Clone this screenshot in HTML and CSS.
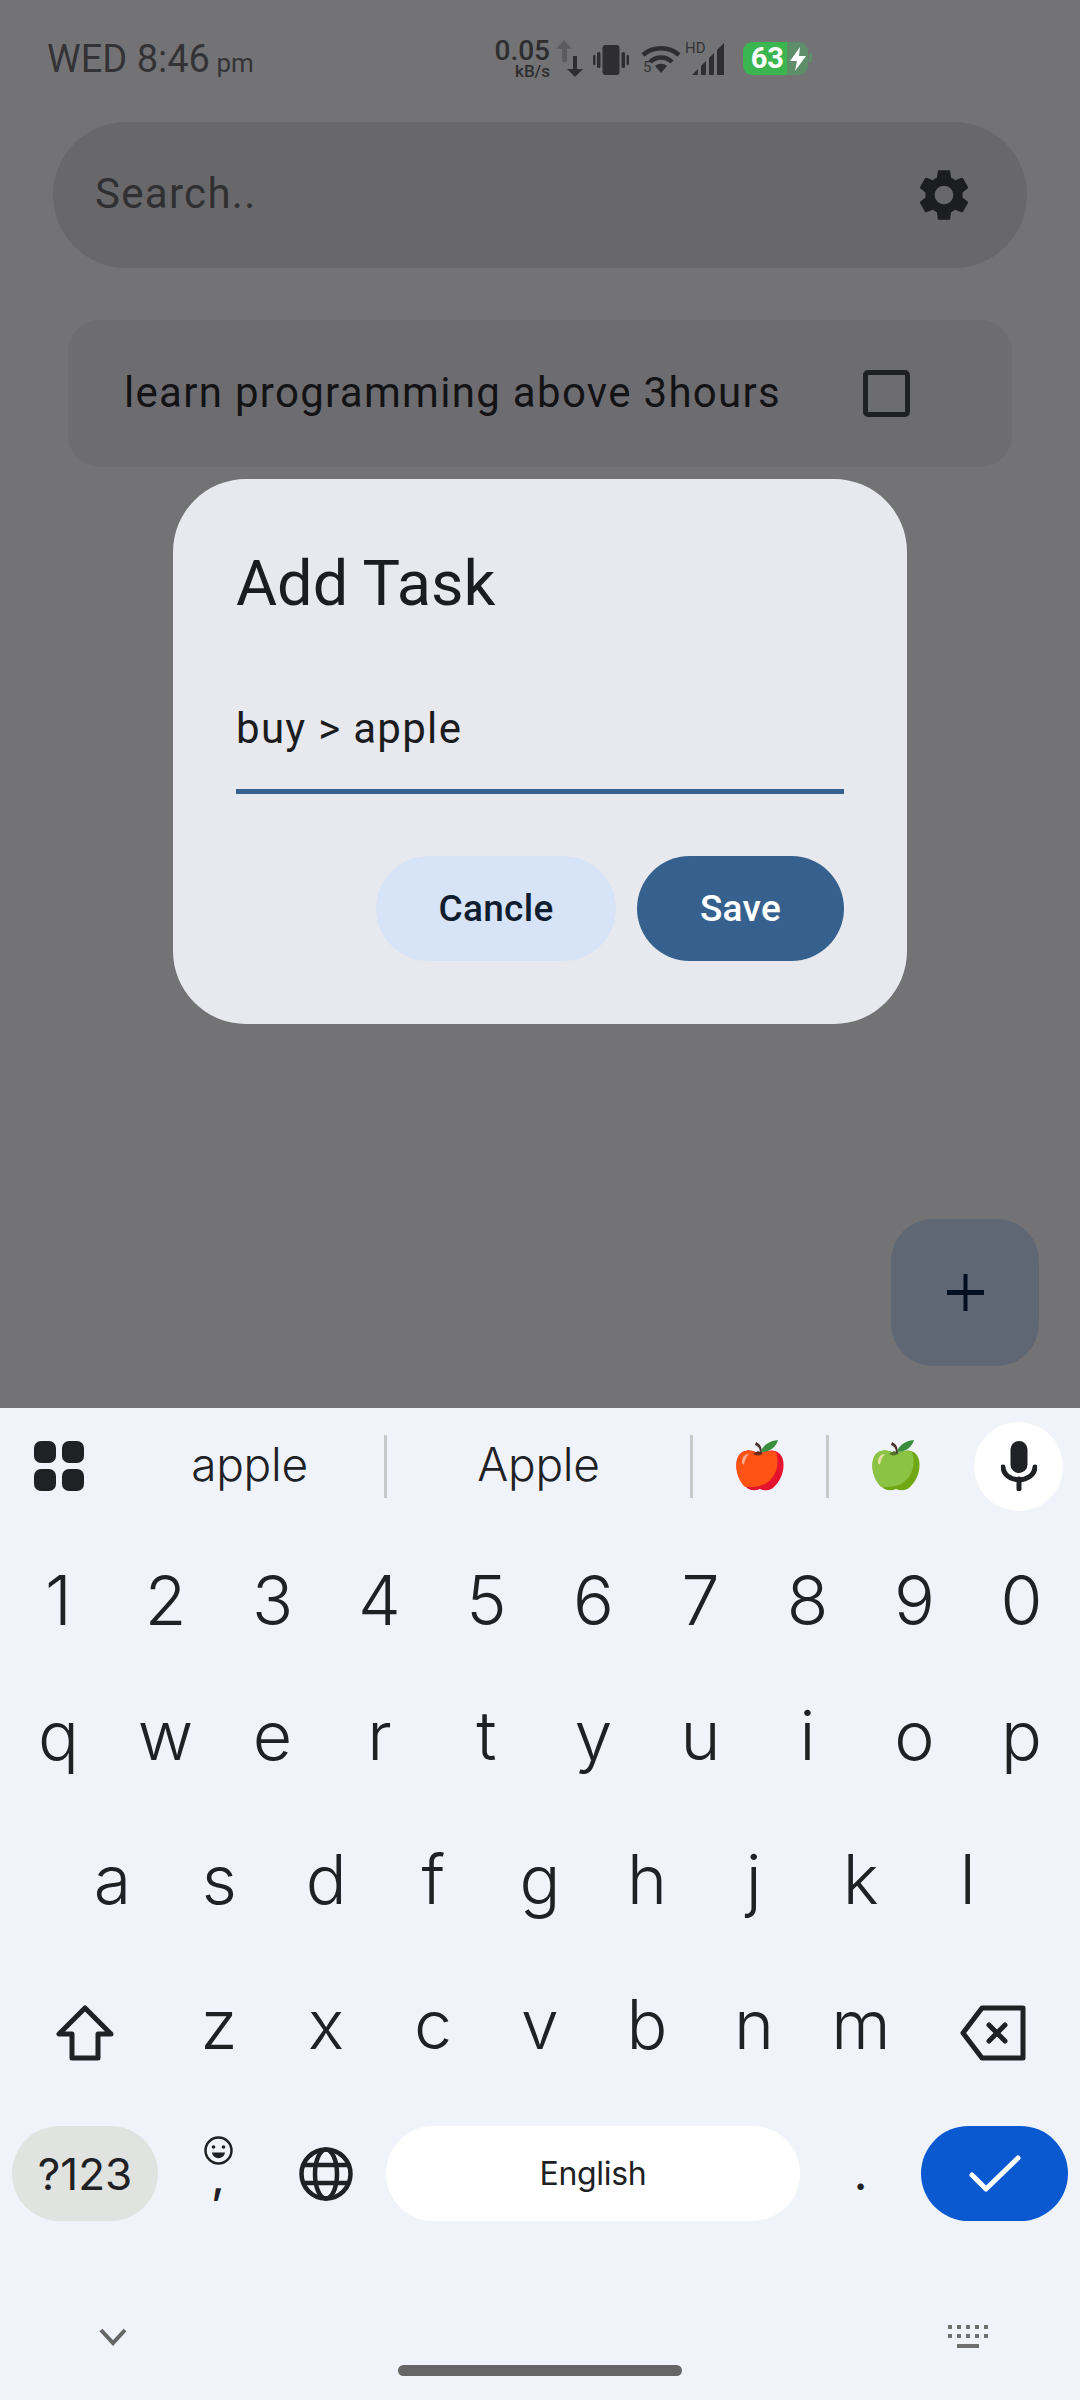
FILE: index.html
```html
<!DOCTYPE html>
<html lang="en">

<head>
    <meta charset="UTF-8">
    <title>Add Task</title>
    <link rel="stylesheet" href="styles.css">
</head>

<body>
    <div class="screen">
        <div class="app">
            <div class="status-bar">
                <div class="clock">WED 8:46 <small>pm</small></div>
                <div class="status-icons">
                    <div class="speed"><span class="speed-num">0.05</span><span class="speed-unit">kB/s</span></div>
                    <svg class="ic-arrows" width="28" height="38" viewBox="0 0 28 38">
                        <path d="M8 0L16 9H11V22H6V9H0Z" fill="#5c5c5e" />
                        <path d="M17 16H21V29H27L19 37L11 29H17Z" fill="#2e2e30" />
                    </svg>
                    <svg class="ic-vibrate" width="36" height="30" viewBox="0 0 36 30" fill="#2e2e30">
                        <rect x="9.500" y="0" width="17" height="30" rx="3" />
                        <rect x="4" y="7" width="3.500" height="16" rx="1.500" />
                        <rect x="28.500" y="7" width="3.500" height="16" rx="1.500" />
                        <rect x="0" y="10" width="2.500" height="10" rx="1" />
                        <rect x="33.500" y="10" width="2.500" height="10" rx="1" />
                    </svg>
                    <div class="wifi">
                        <svg width="40" height="30" viewBox="0 0 40 30" fill="none" stroke="#2e2e30" stroke-width="4.500">
                            <path d="M2 11C12 2 28 2 38 11" />
                            <path d="M9 18C15 12 25 12 31 18" />
                            <path d="M14 22L20 29L26 22C22 19 18 19 14 22Z" fill="#2e2e30" stroke="none" />
                        </svg>
                        <span class="wifi-five">5</span>
                    </div>
                    <div class="signal">
                        <span class="hd">HD</span>
                        <svg width="32" height="32" viewBox="0 0 32 32" fill="#2e2e30">
                            <path d="M0 32L6 26V32Z" />
                            <path d="M9 32V23L14 18V32Z" />
                            <path d="M17 32V15L22 10V32Z" />
                            <path d="M25 32V7L32 0V32Z" />
                        </svg>
                    </div>
                    <div class="battery">
                        <span class="battery-level">63</span>
                        <span class="battery-rest">
                            <svg width="16" height="24" viewBox="0 0 16 24">
                                <path d="M10 0L0 14H7L5 24L16 9H9Z" fill="#fff" />
                            </svg>
                        </span>
                        <span class="battery-tip"></span>
                    </div>
                </div>
            </div>

            <div class="search">
                <span class="search-text">Search..</span>
                <svg class="gear" width="62" height="62" viewBox="0 0 24 24">
                    <path fill="#1c1d20" d="M19.14 12.94c.04-.3.06-.61.06-.94s-.02-.64-.07-.94l2.03-1.58c.18-.14.23-.41.12-.61l-1.92-3.32c-.12-.22-.37-.29-.59-.22l-2.39.96c-.5-.38-1.03-.7-1.62-.94l-.36-2.54c-.04-.24-.24-.41-.48-.41h-3.84c-.24 0-.43.17-.47.41l-.36 2.54c-.59.24-1.13.57-1.62.94l-2.39-.96c-.22-.08-.47 0-.59.22L2.74 8.87c-.12.21-.08.47.12.61l2.03 1.58c-.05.3-.09.63-.09.94s.02.64.07.94l-2.03 1.58c-.18.14-.23.41-.12.61l1.92 3.32c.12.22.37.29.59.22l2.39-.96c.5.38 1.03.7 1.62.94l.36 2.54c.05.24.24.41.48.41h3.84c.24 0 .44-.17.47-.41l.36-2.54c.59-.24 1.13-.56 1.62-.94l2.39.96c.22.08.47 0 .59-.22l1.92-3.32c.12-.22.07-.47-.12-.61l-2.01-1.58zM12 15.6c-1.98 0-3.6-1.62-3.6-3.6s1.62-3.6 3.6-3.6 3.6 1.62 3.6 3.6-1.62 3.6-3.6 3.6z" />
                </svg>
            </div>

            <div class="task-card">
                <span class="task-text">learn programming above 3hours</span>
                <span class="checkbox"></span>
            </div>

            <div class="dialog">
                <div class="dialog-title">Add Task</div>
                <div class="dialog-input">buy &gt; apple</div>
                <div class="dialog-actions">
                    <div class="btn btn-cancel">Cancle</div>
                    <div class="btn btn-save">Save</div>
                </div>
            </div>

            <div class="fab">
                <svg width="37" height="37" viewBox="0 0 37 37" fill="#020f20">
                    <rect x="16.500" y="0" width="4" height="37" />
                    <rect x="0" y="16" width="37" height="5" />
                </svg>
            </div>
        </div>

        <div class="keyboard">
            <div class="strip">
                <div class="strip-icon">
                    <svg width="50" height="50" viewBox="0 0 50 50" fill="#202124">
                        <rect x="0" y="0" width="22" height="22" rx="7" />
                        <rect x="28" y="0" width="22" height="22" rx="7" />
                        <rect x="0" y="28" width="22" height="22" rx="7" />
                        <rect x="28" y="28" width="22" height="22" rx="7" />
                    </svg>
                </div>
                <div class="sugg sugg-first">apple</div>
                <div class="sugg-line"></div>
                <div class="sugg sugg-second">Apple</div>
                <div class="sugg-line"></div>
                <div class="sugg sugg-emoji">
                    <svg class="apple apple-red" width="49" height="52" viewBox="0 0 49 52">
                        <path class="apple-shade" d="M24 14C16 9 6 9 2 17C-2 26 2 40 10 47C14 51 19 51 24 49C29 51 34 51 38 47C46 40 50 26 46 17C42 9 32 9 24 14Z" />
                        <path class="apple-body" d="M24 14C16 9 6 9 2 17C-2 26 1 39 9 47C16 47 26 47 32 42C40 36 44 24 40 12C34 10 29 11 24 14Z" />
                        <path class="apple-shine" d="M6 22C6 17 9 14 13 14C10 17 9 20 8 24C7 25 6 24 6 22Z" />
                        <path d="M17 14C20 16 25 16 27 13L22 11Z" fill="#6b2a1c" />
                        <path d="M24 13C24 9 23 7 19 5L20 2C25 4 26 9 26 13Z" fill="#4e342e" />
                        <path d="M25 12C27 5 33 1 42 0C40 7 34 12 25 12Z" fill="#388e3c" />
                    </svg>
                </div>
                <div class="sugg-line"></div>
                <div class="sugg sugg-emoji">
                    <svg class="apple apple-green" width="49" height="52" viewBox="0 0 49 52">
                        <path class="apple-shade" d="M24 14C16 9 6 9 2 17C-2 26 2 40 10 47C14 51 19 51 24 49C29 51 34 51 38 47C46 40 50 26 46 17C42 9 32 9 24 14Z" />
                        <path class="apple-body" d="M24 14C16 9 6 9 2 17C-2 26 1 39 9 47C16 47 26 47 32 42C40 36 44 24 40 12C34 10 29 11 24 14Z" />
                        <path class="apple-shine" d="M6 22C6 17 9 14 13 14C10 17 9 20 8 24C7 25 6 24 6 22Z" />
                        <path d="M17 14C20 16 25 16 27 13L22 11Z" fill="#55702a" />
                        <path d="M24 13C24 9 23 7 19 5L20 2C25 4 26 9 26 13Z" fill="#4e342e" />
                        <path d="M25 12C27 5 33 1 42 0C40 7 34 12 25 12Z" fill="#388e3c" />
                    </svg>
                </div>
                <div class="mic">
                    <svg width="36" height="50" viewBox="0 0 36 50" fill="none" stroke="#202124" stroke-linecap="round">
                        <rect x="9.500" y="0" width="17" height="32" rx="8.500" fill="#202124" stroke="none" />
                        <path d="M2 26C3 43 33 43 34 26" stroke-width="5" />
                        <path d="M18 38V48" stroke-width="5" />
                    </svg>
                </div>
            </div>

            <div class="row row-digits">
                <span class="key">1</span><span class="key">2</span><span class="key">3</span><span class="key">4</span><span class="key">5</span><span class="key">6</span><span class="key">7</span><span class="key">8</span><span class="key">9</span><span class="key">0</span>
            </div>
            <div class="row row-top">
                <span class="key">q</span><span class="key">w</span><span class="key">e</span><span class="key">r</span><span class="key">t</span><span class="key">y</span><span class="key">u</span><span class="key">i</span><span class="key">o</span><span class="key">p</span>
            </div>
            <div class="row row-home">
                <span class="key">a</span><span class="key">s</span><span class="key">d</span><span class="key">f</span><span class="key">g</span><span class="key">h</span><span class="key">j</span><span class="key">k</span><span class="key">l</span>
            </div>
            <div class="row row-bottom">
                <span class="key-wide key-shift">
                    <svg width="58" height="57" viewBox="0 0 58 57" fill="none" stroke="#202124" stroke-width="5" stroke-linejoin="round">
                        <path d="M29 4L3 30H16V54H42V30H55Z" />
                    </svg>
                </span>
                <span class="key">z</span><span class="key">x</span><span class="key">c</span><span class="key">v</span><span class="key">b</span><span class="key">n</span><span class="key">m</span>
                <span class="key-wide key-back">
                    <svg width="66" height="56" viewBox="0 0 66 56" fill="none" stroke="#202124" stroke-width="5" stroke-linejoin="round" stroke-linecap="round">
                        <path d="M22 3H63V53H22L3 28Z" />
                        <path d="M29 20L45 36M45 20L29 36" />
                    </svg>
                </span>
            </div>

            <div class="action-row">
                <div class="pill pill-sym">?123</div>
                <div class="comma-key">
                    <svg width="29" height="29" viewBox="0 0 29 29" fill="none" stroke="#202124" stroke-width="2.500">
                        <circle cx="14.500" cy="14.500" r="13" />
                        <circle cx="9.500" cy="11" r="1.800" fill="#202124" stroke="none" />
                        <circle cx="19.500" cy="11" r="1.800" fill="#202124" stroke="none" />
                        <path d="M8 16.500H21C20 24 9 24 8 16.500Z" fill="#202124" stroke="none" />
                    </svg>
                    <span class="comma">,</span>
                </div>
                <div class="globe-key">
                    <svg width="54" height="54" viewBox="0 0 54 54" fill="none" stroke="#202124" stroke-width="4.500">
                        <circle cx="27" cy="27" r="24.500" />
                        <ellipse cx="27" cy="27" rx="11" ry="24.500" />
                        <path d="M4 18H50M4 36H50" />
                    </svg>
                </div>
                <div class="pill pill-space">English</div>
                <div class="period-key">.</div>
                <div class="pill pill-enter">
                    <svg width="52" height="38" viewBox="0 0 52 38" fill="none" stroke="#fff" stroke-width="5" stroke-linecap="round" stroke-linejoin="round">
                        <path d="M3 20L17 34L49 3" />
                    </svg>
                </div>
            </div>

            <div class="nav-row">
                <svg width="28" height="18" viewBox="0 0 28 18" fill="none" stroke="#666" stroke-width="4">
                    <path d="M2 2L14 15L26 2" />
                </svg>
                <svg width="40" height="24" viewBox="0 0 40 24" fill="#6f6f6f">
                    <rect x="0" y="0" width="4" height="4" />
                    <rect x="9" y="0" width="4" height="4" />
                    <rect x="18" y="0" width="4" height="4" />
                    <rect x="27" y="0" width="4" height="4" />
                    <rect x="36" y="0" width="4" height="4" />
                    <rect x="0" y="9" width="4" height="4" />
                    <rect x="9" y="9" width="4" height="4" />
                    <rect x="18" y="9" width="4" height="4" />
                    <rect x="27" y="9" width="4" height="4" />
                    <rect x="36" y="9" width="4" height="4" />
                    <rect x="9" y="19" width="22" height="4" />
                </svg>
            </div>
            <div class="home-bar"></div>
        </div>
    </div>
</body>

</html>
```

FILE: styles.css
```css
* {
    box-sizing: border-box;
}

html,
body {
    margin: 0;
    padding: 0;
}

body {
    font-family: Roboto, sans-serif;
}

.screen {
    width: 1080px;
    height: 2400px;
    display: flex;
    flex-direction: column;
    overflow: hidden;
}

/* app behind the scrim */
.app {
    position: relative;
    height: 1408px;
    background: #737375;
    padding: 0 53px;
}

.status-bar {
    height: 122px;
    display: flex;
    align-items: flex-start;
    margin: 0 -53px;
    padding: 38px 0 0 47px;
    color: #333335;
}

.clock {
    width: 448px;
    font-size: 38px;
    line-height: 42px;
    white-space: nowrap;
}

.clock small {
    font-size: 26px;
    margin-left: -3px;
}

.status-icons {
    display: flex;
    align-items: flex-start;
    margin-top: 2px;
    margin-left: -1px;
    position: relative;
}

.speed {
    width: 56px;
    display: flex;
    flex-direction: column;
    align-items: flex-end;
    color: #2e2e30;
}

.speed-num {
    font-size: 28px;
    line-height: 22px;
    font-weight: 500;
}

.speed-unit {
    font-size: 17px;
    line-height: 18px;
    font-weight: 500;
}

.ic-arrows {
    margin: 0 0 0 6px;
}

.ic-vibrate {
    margin: 5px 0 0 9px;
}

.wifi {
    position: relative;
    margin: 4px 0 0 12px;
    width: 40px;
    height: 32px;
}

.wifi-five {
    position: absolute;
    left: 2px;
    top: 15px;
    font-size: 15px;
    line-height: 16px;
}

.signal {
    position: relative;
    width: 36px;
    height: 32px;
    margin: 3px 0 0 7px;
}

.signal svg {
    position: absolute;
    right: 0;
    top: 0;
}

.hd {
    position: absolute;
    left: -3px;
    top: -1px;
    font-size: 15px;
    line-height: 13px;
}

.battery {
    display: flex;
    height: 33px;
    margin: 2px 0 0 19px;
    color: #fff;
}

.battery-level {
    width: 44px;
    background: #3bb54f;
    border-radius: 9px 0 0 9px;
    font-size: 29px;
    font-weight: 700;
    line-height: 33px;
    text-align: right;
    padding-right: 3px;
}

.battery-rest {
    width: 21px;
    background: #5d8e69;
    border-radius: 0 9px 9px 0;
    display: flex;
    align-items: center;
    justify-content: center;
}

.battery-tip {
    width: 3px;
    height: 10px;
    margin: 11px 0 0 1px;
    background: #5d8e69;
    border-radius: 0 2px 2px 0;
}

.search {
    height: 146px;
    background: #68686a;
    border-radius: 73px;
    display: flex;
    align-items: center;
    justify-content: space-between;
    padding: 0 52px 0 42px;
}

.search-text {
    font-size: 42px;
    letter-spacing: 1.3px;
    color: #303032;
    margin-top: -3px;
}

.task-card {
    height: 147px;
    margin: 52px 15px 0;
    background: #6d6d71;
    border-radius: 32px;
    display: flex;
    align-items: center;
    justify-content: space-between;
    padding: 0 102px 0 56px;
}

.task-text {
    font-size: 42px;
    letter-spacing: 1.3px;
    color: #131315;
    white-space: nowrap;
    margin-top: -3px;
}

.checkbox {
    width: 47px;
    height: 47px;
    border: 5px solid #1f2023;
    border-radius: 5px;
}

.dialog {
    position: absolute;
    left: 173px;
    top: 479px;
    width: 734px;
    height: 545px;
    background: #e7e9ee;
    border-radius: 73px;
    padding: 0 63px;
    color: #1a1c20;
}

.dialog-title {
    font-size: 63px;
    line-height: 84px;
    margin-top: 63px;
    white-space: nowrap;
}

.dialog-input {
    font-size: 42px;
    letter-spacing: 1.3px;
    line-height: 56px;
    height: 125px;
    margin-top: 43px;
    padding-top: 32px;
    border-bottom: 5px solid #36618e;
}

.dialog-actions {
    display: flex;
    justify-content: flex-end;
    gap: 21px;
    margin-top: 62px;
}

.btn {
    height: 105px;
    border-radius: 53px;
    display: flex;
    align-items: center;
    justify-content: center;
    font-size: 37px;
    font-weight: 500;
    letter-spacing: 0.3px;
}

.btn-cancel {
    width: 240px;
    background: #d7e3f7;
    color: #0e1d2f;
}

.btn-save {
    width: 207px;
    background: #36618e;
    color: #fff;
}

.fab {
    position: absolute;
    left: 891px;
    top: 1219px;
    width: 148px;
    height: 147px;
    background: #5f6775;
    border-radius: 42px;
    display: flex;
    align-items: center;
    justify-content: center;
}

/* keyboard */
.keyboard {
    position: relative;
    height: 992px;
    background: #f0f3f9;
    color: #202124;
    font-family: Inter, sans-serif;
}

.strip {
    height: 116px;
    display: flex;
    align-items: center;
}

.strip-icon {
    width: 115px;
    padding-left: 34px;
    display: flex;
    margin-top: -1px;
}

.sugg {
    display: flex;
    align-items: center;
    justify-content: center;
    font-size: 46px;
    font-weight: 300;
    letter-spacing: -0.3px;
}

.sugg-first {
    width: 269px;
    padding-bottom: 5px;
}

.sugg-second {
    width: 303px;
    padding-bottom: 5px;
}

.sugg-emoji {
    width: 133px;
    padding-left: 2px;
}

.sugg-emoji svg {
    overflow: visible;
}

.sugg-line {
    width: 3px;
    height: 63px;
    background: #c7c8ca;
}

.apple-red {
    --shade: #e5132e;
    --body: #ff5316;
    --shine: #ffab91;
}

.apple-green {
    --shade: #6fa814;
    --body: #8bc344;
    --shine: #e6dfa8;
}

.apple-shade {
    fill: var(--shade);
}

.apple-body {
    fill: var(--body);
}

.apple-shine {
    fill: var(--shine);
}

.mic {
    width: 89px;
    height: 89px;
    margin-left: 12px;
    border-radius: 50%;
    background: #fff;
    display: flex;
    align-items: center;
    justify-content: center;
}

.row {
    display: flex;
    font-size: 68px;
    font-weight: 300;
    padding: 0 5px;
}

.row-digits {
    height: 131px;
    line-height: 131px;
    margin-top: 11px;
}

.row-top {
    height: 139px;
    line-height: 139px;
}

.row-home {
    height: 148px;
    line-height: 148px;
    padding: 0 59px;
}

.row-bottom {
    height: 143px;
    line-height: 143px;
    padding: 0;
}

.key {
    width: 107px;
    text-align: center;
}

.key-wide {
    width: 165.500px;
    display: flex;
    align-items: center;
    justify-content: center;
    padding-top: 16px;
}

.key-shift {
    padding-left: 4px;
}

.key-back {
    padding-right: 8px;
}

.action-row {
    display: flex;
    align-items: center;
    height: 95px;
    margin-top: 30px;
    padding-left: 12px;
}

.pill {
    height: 95px;
    border-radius: 48px;
    display: flex;
    align-items: center;
    justify-content: center;
}

.pill-sym {
    width: 146px;
    background: #e1e3e1;
    font-size: 44px;
    font-weight: 400;
}

.comma-key {
    width: 120px;
    height: 95px;
    display: flex;
    flex-direction: column;
    align-items: center;
    padding-top: 10px;
}

.comma {
    font-size: 45px;
    line-height: 24px;
    font-weight: 500;
}

.globe-key {
    width: 108px;
    display: flex;
    justify-content: center;
    margin-left: -6px;
}

.pill-space {
    width: 414px;
    margin-left: 6px;
    background: #fff;
    font-size: 32px;
    letter-spacing: -0.3px;
}

.period-key {
    width: 121px;
    text-align: center;
    font-size: 45px;
    font-weight: 500;
}

.pill-enter {
    width: 147px;
    background: #0b59d0;
}

.nav-row {
    display: flex;
    justify-content: space-between;
    align-items: center;
    height: 30px;
    margin-top: 101px;
    padding: 0 92px 0 99px;
}

.home-bar {
    position: absolute;
    left: 398px;
    top: 957px;
    width: 284px;
    height: 11px;
    border-radius: 6px;
    background: #666;
}
```
